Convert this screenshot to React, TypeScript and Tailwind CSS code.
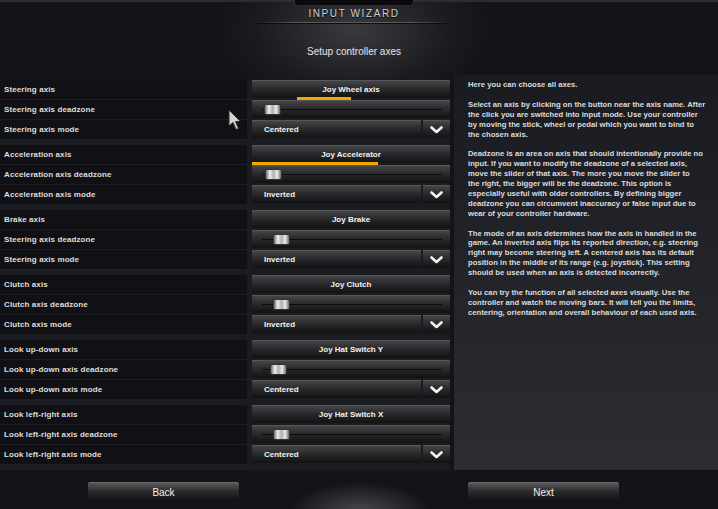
import React from 'react';

type Group = {
  axis: string;
  deadzone: string;
  mode: string;
  button: string;
  value: string;
  thumb: number;
  bar?: { left: number; width: number };
};

const groups: Group[] = [
  { axis: 'Steering axis', deadzone: 'Steering axis deadzone', mode: 'Steering axis mode', button: 'Joy Wheel axis', value: 'Centered', thumb: 12, bar: { left: 45, width: 54 } },
  { axis: 'Acceleration axis', deadzone: 'Acceleration axis deadzone', mode: 'Acceleration axis mode', button: 'Joy Accelerator', value: 'Inverted', thumb: 13, bar: { left: 0, width: 126 } },
  { axis: 'Brake axis', deadzone: 'Steering axis deadzone', mode: 'Steering axis mode', button: 'Joy Brake', value: 'Inverted', thumb: 21 },
  { axis: 'Clutch axis', deadzone: 'Clutch axis deadzone', mode: 'Clutch axis mode', button: 'Joy Clutch', value: 'Inverted', thumb: 21 },
  { axis: 'Look up-down axis', deadzone: 'Look up-down axis deadzone', mode: 'Look up-down axis mode', button: 'Joy Hat Switch Y', value: 'Centered', thumb: 18 },
  { axis: 'Look left-right axis', deadzone: 'Look left-right axis deadzone', mode: 'Look left-right axis mode', button: 'Joy Hat Switch X', value: 'Centered', thumb: 21 },
];

const help: string[][] = [
  ['Here you can choose all axes.'],
  [
    'Select an axis by clicking on the button near the axis name. After',
    'the click you are switched into input mode. Use your controller',
    'by moving the stick, wheel or pedal which you want to bind to',
    'the chosen axis.',
  ],
  [
    'Deadzone is an area on axis that should intentionally provide no',
    'input. If you want to modify the deadzone of a selected axis,',
    'move the slider of that axis. The more you move the slider to',
    'the right, the bigger will be the deadzone. This option is',
    'especially useful with older controllers. By defining bigger',
    'deadzone you can circumvent inaccuracy or false input due to',
    'wear of your controller hardware.',
  ],
  [
    'The mode of an axis determines how the axis in handled in the',
    'game. An inverted axis flips its reported direction, e.g. steering',
    'right may become steering left. A centered axis has its default',
    'position in the middle of its range (e.g. joystick). This setting',
    'should be used when an axis is detected incorrectly.',
  ],
  [
    'You can try the function of all selected axes visually. Use the',
    'controller and watch the moving bars. It will tell you the limits,',
    'centering, orientation and overall behaviour of each used axis.',
  ],
];

const metal = 'bg-[linear-gradient(to_bottom,#454547,#2a2a2c_45%,#121213)] border-t border-[#565658]';

const Label = ({ text }: { text: string }) => (
  <div className="w-[247px] h-full flex items-center pl-[4px] bg-[#111115] border-b border-[#1d1e23] text-[8px] font-bold tracking-[0.1px] text-[#dedede]">
    {text}
  </div>
);

const AxisGroup = ({ g }: { g: Group }) => (
  <div className="flex flex-col">
    <div className="flex h-[20px]">
      <Label text={g.axis} />
      <div className={`relative ml-[5px] w-[198px] h-[18px] flex items-center justify-center text-[8px] font-bold text-[#f2f2f2] ${metal}`}>
        {g.button}
        {g.bar && (
          <div
            className="absolute bottom-[-2px] h-[3px] bg-[#f3a600]"
            style={{ left: g.bar.left, width: g.bar.width }}
          />
        )}
      </div>
    </div>
    <div className="flex h-[20px]">
      <Label text={g.deadzone} />
      <div className={`relative ml-[5px] w-[198px] h-[18px] ${metal}`}>
        <div className="absolute left-[10px] right-[8px] top-[8px] h-[1px] bg-[#555557] border-b border-[#0c0c0c]" />
        <div
          className="absolute top-[3px] w-[17px] h-[11px] rounded-[2px] bg-[linear-gradient(to_right,#6e6e6e,#efefef_25%,#b0b0b0_50%,#eaeaea_75%,#6e6e6e)] border border-[#333]"
          style={{ left: g.thumb }}
        />
      </div>
    </div>
    <div className="flex h-[20px]">
      <Label text={g.mode} />
      <div className="ml-[5px] w-[198px] h-[18px] flex gap-[2px]">
        <div className={`flex-1 flex items-center pl-[12px] text-[8px] font-bold text-[#f2f2f2] ${metal}`}>
          {g.value}
        </div>
        <div className={`w-[27px] flex items-center justify-center ${metal}`}>
          <svg width="13" height="8" viewBox="0 0 13 8">
            <path d="M1.5 1.5 L6.5 6 L11.5 1.5" fill="none" stroke="#f4f4f4" strokeWidth="2.6" strokeLinecap="round" strokeLinejoin="round" />
          </svg>
        </div>
      </div>
    </div>
  </div>
);

const WideButton = ({ children }: { children: React.ReactNode }) => (
  <div className="w-[151px] h-[19px] flex items-center justify-center rounded-[2px] bg-[linear-gradient(to_bottom,#58585a,#2c2c2e_45%,#101011)] border-t border-[#6a6a6c] text-[10px] text-[#f0f0f0]">
    {children}
  </div>
);

export default function App() {
  return (
    <div className="relative w-[718px] h-[509px] overflow-hidden bg-[#141418] font-['Liberation_Sans',Arial,sans-serif]">
      {/* header */}
      <div className="h-[80px] flex flex-col items-center pr-[10px] border-t-2 border-[#2a2c37] bg-[radial-gradient(ellipse_140px_80px_at_354px_28px,#3a3a3e,#1b1b1f_70%,transparent)]">
        <div className="w-[120px] h-[6px] -mt-[2px] rounded-b-[4px] bg-[#0a0a0c] border-x border-b border-[#2b2b30]" />
        <div className="mt-[2px] leading-[12px] text-[10px] tracking-[1.6px] text-[#d2d2d2] [text-shadow:0_1px_1px_#000]">
          INPUT WIZARD
        </div>
        <div className="mt-[2px] w-[192px] h-[2px] bg-[linear-gradient(to_right,transparent,#5a5a5e_20%,#5a5a5e_80%,transparent)] border-b border-[#0d0d0f]" />
        <div className="mt-[21px] text-[10px] leading-[14px] text-[#e6e6e6]">Setup controller axes</div>
      </div>

      {/* main */}
      <div className="h-[390px] flex">
        <div className="w-[450px] flex flex-col gap-[5px] bg-[#1b1c21]">
          {groups.map((g, i) => (
            <AxisGroup key={i} g={g} />
          ))}
        </div>
        <div className="flex-1 -mt-[5px] ml-[4px] pl-[14px] pt-[5px] bg-[linear-gradient(to_bottom,#1a1b21,#232429_50%,#2c2d31)] text-[7.7px] font-bold leading-[9.9px] text-[#dcdcdc] flex flex-col gap-[9.9px]">
          {help.map((p, i) => (
            <div key={i}>
              {p.map((line, j) => (
                <div key={j} className="whitespace-nowrap">{line}</div>
              ))}
            </div>
          ))}
        </div>
      </div>

      {/* footer */}
      <div className="h-[39px] flex pt-[12px] pl-[88px] gap-[229px] bg-[radial-gradient(ellipse_70px_30px_at_360px_42px,#4a4a4e,transparent)]">
        <WideButton>Back</WideButton>
        <WideButton>Next</WideButton>
      </div>

      {/* mouse pointer */}
      <svg className="absolute left-[228px] top-[109px]" width="14" height="22" viewBox="0 0 14 22">
        <path d="M1 1 L1 17 L5 13.5 L8 20.5 L10.5 19.5 L7.5 12.5 L12.5 12.5 Z" fill="#d4d4d4" stroke="#2a2a2a" strokeWidth="1" strokeLinejoin="round" />
      </svg>
    </div>
  );
}
